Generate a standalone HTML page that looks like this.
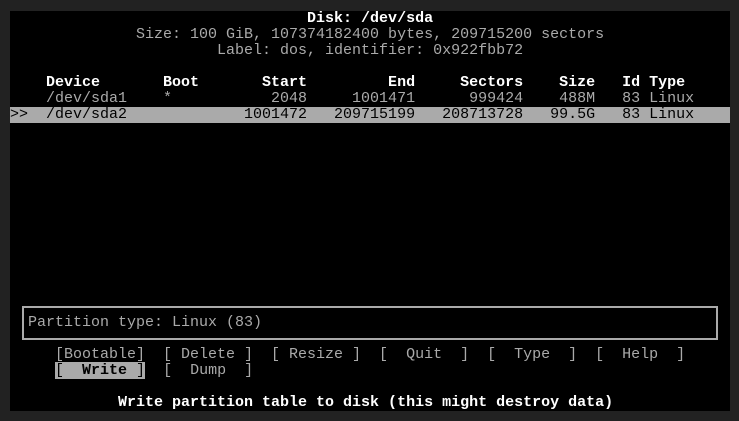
<!DOCTYPE html>
<html><head><meta charset="utf-8"><style>
html,body{margin:0;padding:0;background:#222;width:739px;height:421px;overflow:hidden}
#scr{position:absolute;left:10px;top:11px;width:720px;height:400px;background:#000}
.r{position:absolute;left:0;width:720px;height:16px;white-space:pre;font-family:"Liberation Mono",monospace;font-size:15px;line-height:16px;color:#aaa}
.b{color:#fff;font-weight:bold}
.sel{background:#aaa;color:#000}
.hl{background:#aaa;color:#000}
#box{position:absolute;left:12px;top:295px;width:692px;height:30px;border:2px solid #aaa}
</style></head><body>
<div id="scr">
<div class="r b" style="top:0px">                                 Disk: /dev/sda</div>
<div class="r" style="top:16px">              Size: 100 GiB, 107374182400 bytes, 209715200 sectors</div>
<div class="r" style="top:32px">                       Label: dos, identifier: 0x922fbb72</div>
<div class="r b" style="top:64px">    Device       Boot       Start         End     Sectors    Size   Id Type</div>
<div class="r" style="top:80px">    /dev/sda1    *           2048     1001471      999424    488M   83 Linux</div>
<div class="r sel" style="top:96px">&gt;&gt;  /dev/sda2             1001472   209715199   208713728   99.5G   83 Linux</div>
<div id="box"></div>
<div class="r" style="top:304px">  Partition type: Linux (83)</div>
<div class="r" style="top:336px">     [Bootable]  [ Delete ]  [ Resize ]  [  Quit  ]  [  Type  ]  [  Help  ]</div>
<div class="r" style="top:352px">     <span class="hl">[  <b>Write</b> ]</span>  [  Dump  ]</div>
<div class="r b" style="top:384px">            Write partition table to disk (this might destroy data)</div>
</div>
</body></html>
